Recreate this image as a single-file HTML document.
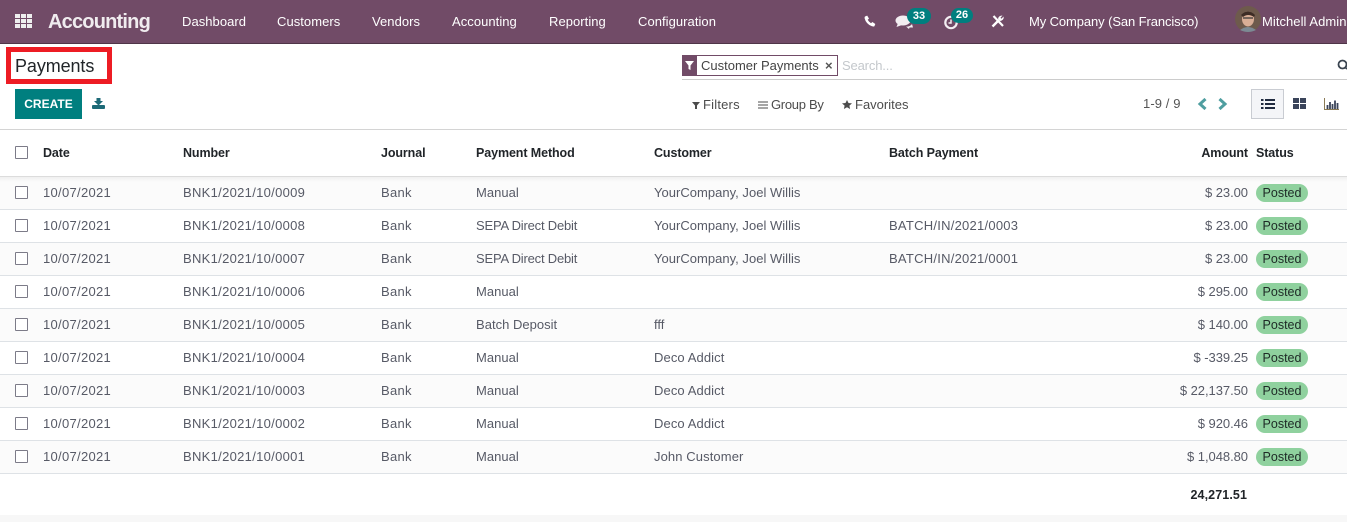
<!DOCTYPE html>
<html><head><meta charset="utf-8"><style>
html,body{margin:0;padding:0;background:#fff}
#p{position:relative;width:1347px;height:522px;overflow:hidden;background:#fff;font-family:"Liberation Sans",sans-serif;font-size:13px;color:#4c4c4c}
#p div,#p svg{position:absolute}
.t{position:absolute;white-space:nowrap;line-height:16px;letter-spacing:.3px}
.n{color:#fff;font-size:13px;top:14px;letter-spacing:.05px}
.h{color:#212529;font-weight:bold;font-size:12.5px;top:145px;letter-spacing:-.1px}
.r{position:absolute;left:0;width:1347px;height:32px;border-bottom:1px solid #dee2e6}
.r .t{top:8px;color:#575a66}
.r .l{letter-spacing:.02px}
.r .m{letter-spacing:.25px}
.c{position:absolute;left:15px;top:9px;width:11px;height:11px;border:1px solid #7c7b88;border-radius:1px;background:#fff}
.r .am{right:99px;letter-spacing:-.05px}
.b{position:absolute;left:1256px;top:7px;width:52px;height:18px;border-radius:9px;background:#8fd19e;color:#1e2a26;text-align:center;line-height:18px;font-size:12.5px}
</style></head><body><div id="p">
<div style="left:0;top:0;width:1347px;height:43px;background:#714b67;border-bottom:1px solid #4f3548"></div>
<svg style="left:15px;top:14px" width="17" height="15" viewBox="0 0 17 15" fill="#eee"><rect width="5" height="4"/><rect x="6" width="5" height="4"/><rect x="12" width="5" height="4"/><rect y="5" width="5" height="4"/><rect x="6" y="5" width="5" height="4"/><rect x="12" y="5" width="5" height="4"/><rect y="10" width="5" height="4"/><rect x="6" y="10" width="5" height="4"/><rect x="12" y="10" width="5" height="4"/></svg>
<span class="t" style="left:48px;top:10px;color:#f0ecef;font-size:20px;line-height:24px;font-weight:bold;letter-spacing:-.8px">Accounting</span>
<span class="t n" style="left:182px">Dashboard</span>
<span class="t n" style="left:277px">Customers</span>
<span class="t n" style="left:372px">Vendors</span>
<span class="t n" style="left:452px">Accounting</span>
<span class="t n" style="left:549px">Reporting</span>
<span class="t n" style="left:638px">Configuration</span>
<svg style="left:864px;top:15px" width="12" height="12" viewBox="0 0 12 12"><path d="M1 1.5 3.2.6 5 3.6 3.7 4.8Q4.8 7 7 8.3L8.4 7 11.3 9 10.4 11.2Q9.6 11.8 8 11.3 2 9 .6 3.2 .5 2 1 1.5Z" fill="#fff"/></svg>
<svg style="left:895px;top:14px" width="20" height="16" viewBox="0 0 20 16"><ellipse cx="8" cy="6.5" rx="7.5" ry="5" fill="#f3eef2"/><path d="M3 9 1.500 13 7 11Z" fill="#f3eef2"/><path d="M11 12.500Q15 13 17 10L18 13.500 14.500 13.500 14 15Z" fill="#f3eef2"/></svg>
<div style="left:907px;top:8px;width:24px;height:16px;border-radius:8px;background:#007f7f;color:#fff;font-size:11px;font-weight:bold;line-height:16px;text-align:center">33</div>
<svg style="left:943px;top:14px" width="16" height="16" viewBox="0 0 16 16"><circle cx="8" cy="8.500" r="5.700" fill="none" stroke="#f3eef2" stroke-width="2.200"/><path d="M8 5.500V9H5.500" fill="none" stroke="#f3eef2" stroke-width="1.500"/></svg>
<div style="left:951px;top:8px;width:22px;height:15px;border-radius:8px;background:#007f7f;color:#fff;font-size:11px;font-weight:bold;line-height:15px;text-align:center">26</div>
<svg style="left:991px;top:15px" width="13" height="13" viewBox="0 0 13 13"><path d="M2.500 1 12 11" stroke="#fff" stroke-width="2.200" fill="none"/><path d="M1.500 11.500 8 5" stroke="#fff" stroke-width="2.400" fill="none"/><path d="M7 4Q7.500.5 11.500.5L9.500 2.800 10.300 3.700 12.700 1.500Q13 5.500 9 6Z" fill="#fff"/></svg>
<span class="t n" style="left:1029px;letter-spacing:-.1px">My Company (San Francisco)</span>
<svg style="left:1235px;top:6px" width="26" height="26" viewBox="0 0 26 26"><circle cx="13" cy="13" r="13" fill="#6e5a4c"/><path d="M5 24Q13 18 21 24 13 28 5 24Z" fill="#7c8a94"/><ellipse cx="13" cy="13" rx="6" ry="7.500" fill="#d9ae96"/><path d="M6 9Q13 2 20 9L19 11Q13 7 8 11Z" fill="#3d2c25"/><path d="M8 12H18" stroke="#333" stroke-width="1.200"/></svg>
<span class="t n" style="left:1262px">Mitchell Admin</span>

<div style="left:6px;top:47px;width:96px;height:27px;border:5px solid #ed1c24"></div>
<span class="t" style="left:15px;top:56px;font-size:18px;line-height:21px;color:#212529;letter-spacing:-.1px">Payments</span>
<div style="left:15px;top:89px;width:67px;height:30px;background:#007f7f;color:#fff;font-weight:bold;font-size:12px;line-height:30px;text-align:center">CREATE</div>
<svg style="left:92px;top:98px" width="13" height="11" viewBox="0 0 13 11"><path d="M4.500 0H8.500V3H11L6.500 7.500 2 3H4.500Z" fill="#1d6a77"/><rect y="7" width="13" height="4" rx="1" fill="#1d6a77"/></svg>
<div style="left:0;top:129px;width:1347px;height:1px;background:#d4d4d4"></div>

<div style="left:682px;top:79px;width:665px;height:1px;background:#ccc"></div>
<div style="left:682px;top:55px;width:14px;height:21px;background:#714b67"></div>
<svg style="left:685px;top:61px" width="9" height="9" viewBox="0 0 9 9"><path d="M0 0H9L5.500 4.500V9L3.500 8V4.500Z" fill="#fff"/></svg>
<div style="left:696px;top:55px;width:140px;height:19px;border:1px solid #714b67"></div>
<span class="t" style="left:701px;top:58px;color:#444;letter-spacing:0">Customer Payments</span>
<span class="t" style="left:825px;top:58px;color:#555;font-weight:bold;font-size:13px;letter-spacing:0">×</span>
<span class="t" style="left:842px;top:58px;color:#c4c8cc;letter-spacing:-.15px">Search...</span>
<svg style="left:1337px;top:59px" width="10" height="12" viewBox="0 0 10 12"><circle cx="5.500" cy="5.500" r="4" fill="none" stroke="#3a4450" stroke-width="1.800"/><path d="M8 8 10 10" stroke="#3a4450" stroke-width="1.800"/></svg>

<svg style="left:692px;top:102px" width="8" height="7" viewBox="0 0 8 7"><path d="M0 0H8L5 3.500V7H3V3.500Z" fill="#4c4c4c"/></svg>
<span class="t" style="left:703px;top:97px;color:#4c4c4c;font-size:13px;letter-spacing:.2px">Filters</span>
<svg style="left:758px;top:101px" width="10" height="8" viewBox="0 0 10 8"><path d="M0 1H10M0 4H10M0 7H10" stroke="#4c4c4c" stroke-width="1"/></svg>
<span class="t" style="left:771px;top:97px;color:#4c4c4c;letter-spacing:-.3px">Group By</span>
<svg style="left:842px;top:100px" width="10" height="9" viewBox="0 0 10 9"><path d="M5 0 6.500 3 10 3.400 7.400 5.600 8.100 9 5 7.300 1.900 9 2.600 5.600 0 3.400 3.500 3Z" fill="#4c4c4c"/></svg>
<span class="t" style="left:855px;top:97px;color:#4c4c4c;letter-spacing:0">Favorites</span>

<span class="t" style="left:1143px;top:96px;color:#555;letter-spacing:.1px">1-9 / 9</span>
<svg style="left:1197px;top:98px" width="10" height="12" viewBox="0 0 10 12"><path d="M8.500 1 3 6 8.500 11" fill="none" stroke="#4f9ea0" stroke-width="3"/></svg>
<svg style="left:1218px;top:98px" width="10" height="12" viewBox="0 0 10 12"><path d="M1.500 1 7 6 1.500 11" fill="none" stroke="#4f9ea0" stroke-width="3"/></svg>
<div style="left:1251px;top:89px;width:31px;height:28px;background:#f4f5f8;border:1px solid #c9ccd2"></div>
<svg style="left:1261px;top:98px" width="14" height="12" viewBox="0 0 14 12"><path d="M4 2H14M4 6H14M4 10H14M0 2H2.500M0 6H2.500M0 10H2.500" stroke="#212b40" stroke-width="2"/></svg>
<svg style="left:1293px;top:98px" width="13" height="11" viewBox="0 0 13 11" fill="#3a445a"><rect width="6" height="5"/><rect x="7" width="6" height="5"/><rect y="6" width="6" height="5"/><rect x="7" y="6" width="6" height="5"/></svg>
<svg style="left:1324px;top:98px" width="15" height="12" viewBox="0 0 15 12"><path d="M.5 0V11.500H15" fill="none" stroke="#8a7a55" stroke-width="1"/><path d="M3.500 11V7M6 11V4M8.500 11V6M11 11V2.500M13.500 11V5" stroke="#3a445a" stroke-width="1.800"/></svg>

<div style="left:15px;top:146px;width:11px;height:11px;border:1px solid #7c7b88;border-radius:1px"></div>
<span class="t h" style="left:43px">Date</span>
<span class="t h" style="left:183px">Number</span>
<span class="t h" style="left:381px">Journal</span>
<span class="t h" style="left:476px">Payment Method</span>
<span class="t h" style="left:654px">Customer</span>
<span class="t h" style="left:889px">Batch Payment</span>
<span class="t h" style="right:99px">Amount</span>
<span class="t h" style="left:1256px">Status</span>
<div style="left:0;top:176px;width:1347px;height:1px;background:#dcdcdc"></div>

<div class="r" style="top:177px;background:linear-gradient(#f0f0f0,#fbfbfb 5px)"><span class="c"></span><span class="t" style="left:43px">10/07/2021</span><span class="t" style="left:183px">BNK1/2021/10/0009</span><span class="t" style="left:381px">Bank</span><span class="t l" style="left:476px">Manual</span><span class="t l" style="left:654px">YourCompany, Joel Willis</span><span class="t am">$ 23.00</span><span class="b">Posted</span></div>
<div class="r" style="top:210px;background:#fff"><span class="c"></span><span class="t" style="left:43px">10/07/2021</span><span class="t" style="left:183px">BNK1/2021/10/0008</span><span class="t" style="left:381px">Bank</span><span class="t l" style="left:476px;letter-spacing:-.2px">SEPA Direct Debit</span><span class="t l" style="left:654px">YourCompany, Joel Willis</span><span class="t m" style="left:889px">BATCH/IN/2021/0003</span><span class="t am">$ 23.00</span><span class="b">Posted</span></div>
<div class="r" style="top:243px;background:#fbfbfb"><span class="c"></span><span class="t" style="left:43px">10/07/2021</span><span class="t" style="left:183px">BNK1/2021/10/0007</span><span class="t" style="left:381px">Bank</span><span class="t l" style="left:476px;letter-spacing:-.2px">SEPA Direct Debit</span><span class="t l" style="left:654px">YourCompany, Joel Willis</span><span class="t m" style="left:889px">BATCH/IN/2021/0001</span><span class="t am">$ 23.00</span><span class="b">Posted</span></div>
<div class="r" style="top:276px;background:#fff"><span class="c"></span><span class="t" style="left:43px">10/07/2021</span><span class="t" style="left:183px">BNK1/2021/10/0006</span><span class="t" style="left:381px">Bank</span><span class="t l" style="left:476px">Manual</span><span class="t am">$ 295.00</span><span class="b">Posted</span></div>
<div class="r" style="top:309px;background:#fbfbfb"><span class="c"></span><span class="t" style="left:43px">10/07/2021</span><span class="t" style="left:183px">BNK1/2021/10/0005</span><span class="t" style="left:381px">Bank</span><span class="t l" style="left:476px">Batch Deposit</span><span class="t l" style="left:654px">fff</span><span class="t am">$ 140.00</span><span class="b">Posted</span></div>
<div class="r" style="top:342px;background:#fff"><span class="c"></span><span class="t" style="left:43px">10/07/2021</span><span class="t" style="left:183px">BNK1/2021/10/0004</span><span class="t" style="left:381px">Bank</span><span class="t l" style="left:476px">Manual</span><span class="t l" style="left:654px;letter-spacing:.1px">Deco Addict</span><span class="t am">$ -339.25</span><span class="b">Posted</span></div>
<div class="r" style="top:375px;background:#fbfbfb"><span class="c"></span><span class="t" style="left:43px">10/07/2021</span><span class="t" style="left:183px">BNK1/2021/10/0003</span><span class="t" style="left:381px">Bank</span><span class="t l" style="left:476px">Manual</span><span class="t l" style="left:654px;letter-spacing:.1px">Deco Addict</span><span class="t am">$ 22,137.50</span><span class="b">Posted</span></div>
<div class="r" style="top:408px;background:#fff"><span class="c"></span><span class="t" style="left:43px">10/07/2021</span><span class="t" style="left:183px">BNK1/2021/10/0002</span><span class="t" style="left:381px">Bank</span><span class="t l" style="left:476px">Manual</span><span class="t l" style="left:654px;letter-spacing:.1px">Deco Addict</span><span class="t am">$ 920.46</span><span class="b">Posted</span></div>
<div class="r" style="top:441px;background:#fbfbfb"><span class="c"></span><span class="t" style="left:43px">10/07/2021</span><span class="t" style="left:183px">BNK1/2021/10/0001</span><span class="t" style="left:381px">Bank</span><span class="t l" style="left:476px">Manual</span><span class="t l" style="left:654px;letter-spacing:.1px">John Customer</span><span class="t am">$ 1,048.80</span><span class="b">Posted</span></div>

<span class="t" style="right:100px;top:487px;color:#212529;font-weight:bold;font-size:12.500px;letter-spacing:.1px">24,271.51</span>
<div style="left:0;top:515px;width:1347px;height:7px;background:#f7f7f7"></div>
</div></body></html>
